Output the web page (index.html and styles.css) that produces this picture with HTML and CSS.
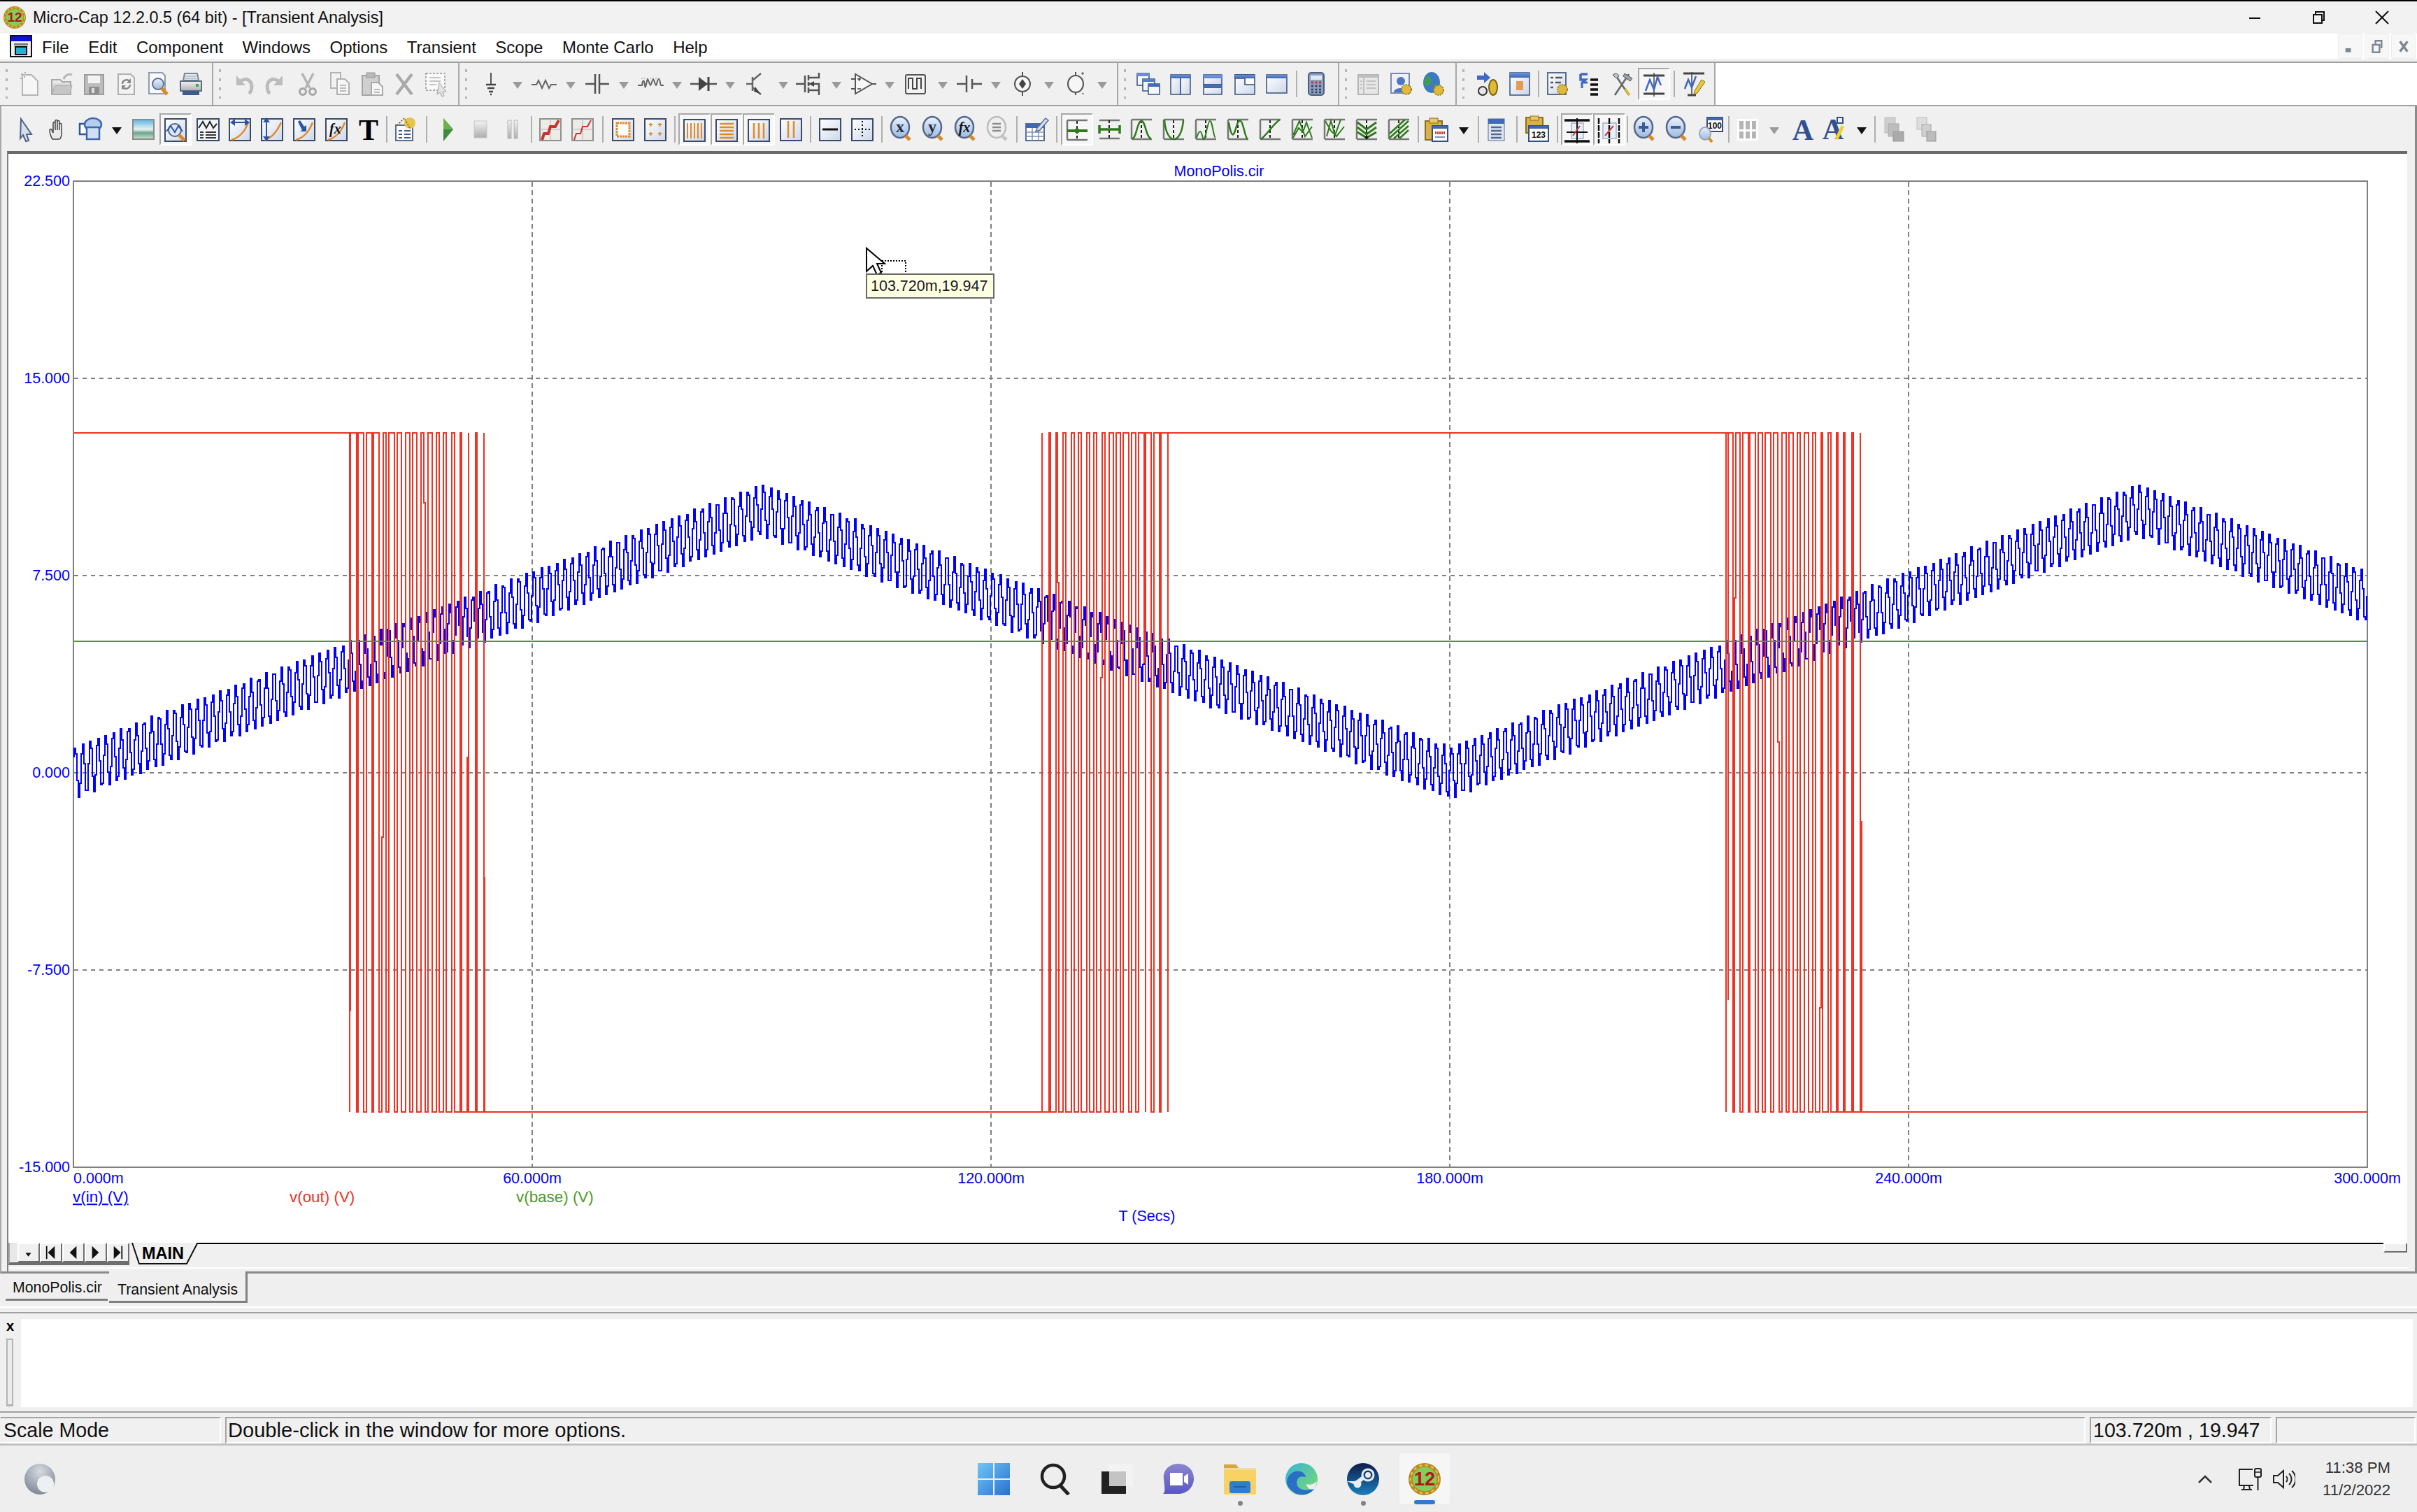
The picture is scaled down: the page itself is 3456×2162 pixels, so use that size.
FILE: index.html
```html
<!DOCTYPE html>
<html lang="en">
<head>
<meta charset="utf-8">
<title>Micro-Cap 12.2.0.5 (64 bit) - [Transient Analysis]</title>
<link rel="stylesheet" href="styles.css">
</head>
<body>
<svg class="defs" width="0" height="0" aria-hidden="true">
  <defs>
    <linearGradient id="gGray" x1="0" y1="0" x2="0" y2="1"><stop offset="0" stop-color="#f2f2f2"/><stop offset="1" stop-color="#aeaeae"/></linearGradient>
    <linearGradient id="gPage" x1="0" y1="0" x2="1" y2="1"><stop offset="0" stop-color="#ffffff"/><stop offset="1" stop-color="#cdd7ea"/></linearGradient>
    <linearGradient id="gBlue" x1="0" y1="0" x2="0" y2="1"><stop offset="0" stop-color="#6f95dc"/><stop offset="1" stop-color="#3e66b0"/></linearGradient>
    <linearGradient id="gSky" x1="0" y1="0" x2="0" y2="1"><stop offset="0" stop-color="#5fb2dc"/><stop offset=".5" stop-color="#e6f3f4"/><stop offset=".68" stop-color="#6aa487"/><stop offset="1" stop-color="#cfe4d8"/></linearGradient>
    <linearGradient id="gGlass" x1="0" y1="0" x2="0" y2="1"><stop offset="0" stop-color="#eaf2fb"/><stop offset="1" stop-color="#9db9de"/></linearGradient>
    <linearGradient id="gWin" x1="0" y1="0" x2="1" y2="1"><stop offset="0" stop-color="#6fc6f5"/><stop offset="1" stop-color="#2a6fd0"/></linearGradient>
    <linearGradient id="gChat" x1="0" y1="0" x2="0" y2="1"><stop offset="0" stop-color="#8d86cf"/><stop offset="1" stop-color="#5a57c4"/></linearGradient>
    <linearGradient id="gEdge" x1="0" y1="0" x2="1" y2="1"><stop offset="0" stop-color="#36b4d8"/><stop offset="1" stop-color="#7fdc6a"/></linearGradient>
    <linearGradient id="gSteam" x1="0" y1="0" x2="0" y2="1"><stop offset="0" stop-color="#0f1d4a"/><stop offset="1" stop-color="#1a7fbd"/></linearGradient>
    <radialGradient id="gOrb" cx=".5" cy=".25" r=".9"><stop offset="0" stop-color="#d6dbe2"/><stop offset="1" stop-color="#6e7785"/></radialGradient>

    <!-- row 1: file -->
    <symbol id="i-new" viewBox="0 0 46 40"><path d="M12 7h13l9 9v20H12z" fill="#f6f6f6" stroke="#b5b5b5" stroke-width="2"/><path d="M10 5h2v2h-2zM15 3h2v2h-2zM20 6h2v2h-2zM14 9h2v2h-2zM9 11h2v2H9z" fill="#aaa"/></symbol>
    <symbol id="i-open" viewBox="0 0 46 40"><path d="M8 14h12l3 3h12v18H8z" fill="url(#gGray)" stroke="#a8a8a8" stroke-width="2"/><path d="M25 13c2-6 8-8 12-6" fill="none" stroke="#b5b5b5" stroke-width="3"/><path d="M8 35l5-13h24l-3 13z" fill="#c6c6c6" stroke="#aaa"/></symbol>
    <symbol id="i-save" viewBox="0 0 46 40"><rect x="9" y="7" width="27" height="28" fill="#bcbcbc" stroke="#9c9c9c" stroke-width="2"/><rect x="14" y="8" width="17" height="11" fill="#f2f2f2"/><rect x="15" y="24" width="15" height="11" fill="#8e8e8e"/><rect x="19" y="26" width="4" height="7" fill="#ddd"/></symbol>
    <symbol id="i-revert" viewBox="0 0 46 40"><path d="M11 6h18l5 5v24H11z" fill="#f3f3f3" stroke="#b0b0b0" stroke-width="2"/><path d="M17 20a6 6 0 0 1 11-3M28 21a6 6 0 0 1-11 3" fill="none" stroke="#888" stroke-width="2.5"/><path d="M29 12v7h-6zM16 29v-7h6z" fill="#888"/></symbol>
    <symbol id="i-preview" viewBox="0 0 46 40"><path d="M9 4h19l4 4v26H9z" fill="#fafafa" stroke="#8f9bb0" stroke-width="2"/><circle cx="22" cy="20" r="8" fill="url(#gGlass)" stroke="#5a6f95" stroke-width="2"/><path d="M27 26l8 9" stroke="#d98a28" stroke-width="5"/></symbol>
    <symbol id="i-print" viewBox="0 0 46 40"><path d="M14 5h18l2 10H12z" fill="#e4e8ef" stroke="#7c8798" stroke-width="2"/><path d="M14 9h17M14 12h17" stroke="#9aa5b5"/><path d="M8 16h30v14H8z" fill="url(#gGray)" stroke="#5f6d83" stroke-width="2"/><rect x="11" y="30" width="24" height="6" fill="#3c5a8c"/><rect x="30" y="20" width="4" height="4" fill="#2fae4e"/></symbol>
    <!-- row 1: edit -->
    <symbol id="i-undo" viewBox="0 0 46 40"><path d="M31 34c5-4 5-14 1-18-4-4-9-3-13 0" fill="none" stroke="#bcbcbc" stroke-width="5"/><path d="M13 8v14h13z" fill="#bcbcbc"/></symbol>
    <symbol id="i-redo" viewBox="0 0 46 40"><path d="M15 34c-5-4-5-14-1-18 4-4 9-3 13 0" fill="none" stroke="#bcbcbc" stroke-width="5"/><path d="M33 8v14H20z" fill="#bcbcbc"/></symbol>
    <symbol id="i-cut" viewBox="0 0 46 40"><path d="M15 5l11 21M31 5L20 26" stroke="#b5b5b5" stroke-width="3.5" fill="none"/><circle cx="16" cy="31" r="4.5" fill="none" stroke="#a5a5a5" stroke-width="3"/><circle cx="30" cy="31" r="4.5" fill="none" stroke="#a5a5a5" stroke-width="3"/></symbol>
    <symbol id="i-copy" viewBox="0 0 46 40"><path d="M10 4h14v22H10z" fill="#f2f2f2" stroke="#b5b5b5" stroke-width="2"/><path d="M19 13h11l6 6v16H19z" fill="#f7f7f7" stroke="#b0b0b0" stroke-width="2"/><path d="M23 22h9M23 26h9M23 30h9" stroke="#bbb" stroke-width="2"/></symbol>
    <symbol id="i-paste" viewBox="0 0 46 40"><rect x="9" y="8" width="24" height="28" fill="#cfcfcf" stroke="#a5a5a5" stroke-width="2"/><rect x="15" y="4" width="12" height="7" fill="#b8b8b8" stroke="#999"/><path d="M22 18h10l6 6v12H22z" fill="#f7f7f7" stroke="#aaa" stroke-width="2"/><path d="M26 28h8M26 32h8" stroke="#bbb" stroke-width="2"/></symbol>
    <symbol id="i-del" viewBox="0 0 46 40"><path d="M12 6l22 29M34 6L12 35" stroke="#a9a9a9" stroke-width="4.5" fill="none"/></symbol>
    <symbol id="i-selall" viewBox="0 0 46 40"><rect x="8" y="5" width="27" height="24" fill="#fafafa" stroke="#aaa" stroke-width="2" stroke-dasharray="3 2"/><path d="M13 11h16M13 16h16M13 21h10" stroke="#c5c5c5" stroke-width="2"/><path d="M27 18l10 13h-5l2 6-3 1-3-6-4 3z" fill="#e4e4e4" stroke="#a0a0a0"/></symbol>
    <!-- row 1: components -->
    <symbol id="i-ground" viewBox="0 0 46 40"><path d="M23 4v17" stroke="#555" stroke-width="2"/><path d="M16 21h14M18 26h10M20 31h6M22 35h2" stroke="#444" stroke-width="2.5"/></symbol>
    <symbol id="i-res" viewBox="0 0 46 40"><path d="M5 21h7l3-6 5 11 5-11 5 11 3-5h8" fill="none" stroke="#666" stroke-width="2"/></symbol>
    <symbol id="i-cap" viewBox="0 0 46 40"><path d="M6 20h14M26 20h14M20 6v28M26 6v28" fill="none" stroke="#555" stroke-width="2.5"/></symbol>
    <symbol id="i-ind" viewBox="0 0 46 40"><path d="M5 22h6c1-9 3-9 4 0s3-9 4-9 3 9 4 9 3-9 4-9 3 9 4 9 2-9 4-9 2 9 3 9h4" fill="none" stroke="#666" stroke-width="2"/><path d="M10 12h26" stroke="#999" stroke-dasharray="2 2"/></symbol>
    <symbol id="i-diode" viewBox="0 0 46 40"><path d="M4 20h38" stroke="#555" stroke-width="2.5"/><path d="M16 10v20l13-10z" fill="#444"/><path d="M30 10v20" stroke="#444" stroke-width="3"/></symbol>
    <symbol id="i-bjt" viewBox="0 0 46 40"><path d="M8 20h8M17 10v20M17 15l12-10M17 25l12 10" fill="none" stroke="#666" stroke-width="2.5"/><path d="M21 24l7 10-9-3z" fill="#444"/></symbol>
    <symbol id="i-mos" viewBox="0 0 46 40"><path d="M3 20h13M16 8v24M21 7v8M21 17v6M21 25v8M21 11h15V4M21 29h15v7M22 20h14V29" fill="none" stroke="#555" stroke-width="2.5"/><path d="M22 20l7-4v8z" fill="#444"/></symbol>
    <symbol id="i-opamp" viewBox="0 0 46 40"><path d="M12 6v28l24-14z" fill="#f7f7f7" stroke="#555" stroke-width="2"/><path d="M6 13h6M6 27h6M36 20h6" stroke="#555" stroke-width="2"/><path d="M15 13h5M17.500 11v5M15 27h5" stroke="#444" stroke-width="1.500"/></symbol>
    <symbol id="i-pulse" viewBox="0 0 46 40"><rect x="8" y="7" width="28" height="27" rx="2" fill="#f2f2f2" stroke="#555" stroke-width="2"/><path d="M12 27V12h6v15h6V12h6v15" fill="none" stroke="#444" stroke-width="2"/></symbol>
    <symbol id="i-batt" viewBox="0 0 46 40"><path d="M5 20h14M27 20h14M19 8v24M27 13v14" stroke="#555" stroke-width="2.500" fill="none"/></symbol>
    <symbol id="i-vsrc" viewBox="0 0 46 40"><ellipse cx="23" cy="20" rx="11" ry="11" fill="#f6f6f6" stroke="#555" stroke-width="2"/><path d="M23 3v6M23 31v6" stroke="#555" stroke-width="2"/><path d="M23 13l5 7-5 7-5-7z" fill="#444"/></symbol>
    <symbol id="i-isrc" viewBox="0 0 46 40"><ellipse cx="23" cy="20" rx="11" ry="12" fill="#f6f6f6" stroke="#555" stroke-width="2"/><path d="M23 3v5M23 32v4" stroke="#555" stroke-width="2"/><path d="M31 5h4M33 3v4M32 34h3" stroke="#444"/></symbol>
    <!-- windows -->
    <symbol id="i-casc" viewBox="0 0 46 40"><g fill="#f4f7fc" stroke="#34507f" stroke-width="1.500"><rect x="7" y="5" width="17" height="17"/><rect x="15" y="13" width="17" height="17"/><rect x="23" y="20" width="16" height="15"/></g><path d="M7 5h17v4H7zM15 13h17v4H15zM23 20h16v4H23z" fill="url(#gBlue)"/></symbol>
    <symbol id="i-tilev" viewBox="0 0 46 40"><rect x="9" y="7" width="14" height="28" fill="url(#gPage)" stroke="#34507f" stroke-width="1.500"/><rect x="23" y="7" width="14" height="28" fill="url(#gPage)" stroke="#34507f" stroke-width="1.500"/><path d="M9 7h14v5H9zM23 7h14v5H23z" fill="url(#gBlue)"/></symbol>
    <symbol id="i-tileh" viewBox="0 0 46 40"><rect x="10" y="7" width="26" height="14" fill="url(#gPage)" stroke="#34507f" stroke-width="1.500"/><rect x="10" y="21" width="26" height="14" fill="url(#gPage)" stroke="#34507f" stroke-width="1.500"/><path d="M10 7h26v5H10zM10 21h26v5H10z" fill="url(#gBlue)"/></symbol>
    <symbol id="i-tile3" viewBox="0 0 46 40"><path d="M9 7h28v28H9z" fill="url(#gPage)" stroke="#34507f" stroke-width="1.500"/><path d="M23 7v14h14M9 7h14v5H9zM23 7h14v0" fill="none" stroke="#34507f" stroke-width="1.500"/><path d="M9 7h14v5H9zM24 7h13v5H24z" fill="url(#gBlue)"/><path d="M25 13h11v7H25z" fill="#fff"/></symbol>
    <symbol id="i-winf" viewBox="0 0 46 40"><rect x="8" y="7" width="29" height="26" fill="url(#gPage)" stroke="#34507f" stroke-width="1.500"/><path d="M8 7h29v5H8z" fill="url(#gBlue)"/></symbol>
    <symbol id="i-calc" viewBox="0 0 46 40"><rect x="12" y="4" width="22" height="32" rx="4" fill="#8fa0bd" stroke="#4b5d80" stroke-width="2"/><rect x="15" y="8" width="16" height="6" fill="#dfe8f3"/><path d="M16 18h3M21.500 18h3M27 18h3" stroke="#c33" stroke-width="3"/><path d="M16 23h3M21.500 23h3M27 23h3M16 28h3M21.500 28h3M27 28h3M16 32h3M21.500 32h3M27 32h3" stroke="#2f3f63" stroke-width="2.500"/></symbol>
    <symbol id="i-next" viewBox="0 0 46 40"><rect x="8" y="7" width="29" height="28" fill="#e6e6e6" stroke="#b5b5b5" stroke-width="2"/><path d="M8 7h29v4H8z" fill="#bdbdbd"/><path d="M16 11v24M11 16h3M11 21h3M11 26h3M20 16h13M20 21h13M20 26h13" stroke="#b5b5b5" stroke-width="1.500"/></symbol>
    <symbol id="i-person" viewBox="0 0 46 40"><rect x="9" y="5" width="26" height="28" fill="#eef1f6" stroke="#7a8aa8" stroke-width="2"/><circle cx="23" cy="16" r="6" fill="#4d77c4"/><path d="M13 32c0-8 20-8 20 0z" fill="#4d77c4"/><circle cx="31" cy="28" r="7" fill="#e1b93a" stroke="#9c7d16" stroke-dasharray="2 1.500" stroke-width="2"/></symbol>
    <symbol id="i-globe" viewBox="0 0 46 40"><ellipse cx="21" cy="18" rx="12" ry="15" fill="#3c7bc4"/><path d="M14 8c5 2 9 6 5 12s-7 2-9-2M24 22c5-2 9 0 7 5s-6 5-7 0z" fill="#3f9e4d"/><circle cx="31" cy="29" r="7" fill="#e1b93a" stroke="#9c7d16" stroke-dasharray="2 1.500" stroke-width="2"/></symbol>
    <symbol id="i-run" viewBox="0 0 46 40"><path d="M8 8h10V3l9 8-9 8v-5H8z" fill="#3f68c4"/><circle cx="16" cy="30" r="6" fill="#e8e8e8" stroke="#333" stroke-width="2"/><ellipse cx="31" cy="25" rx="6" ry="11" fill="#e1b93a" stroke="#7a6412" stroke-width="2"/></symbol>
    <symbol id="i-wino" viewBox="0 0 46 40"><rect x="9" y="4" width="28" height="32" fill="url(#gPage)" stroke="#34507f" stroke-width="1.500"/><path d="M9 4h28v7H9z" fill="url(#gBlue)"/><rect x="18" y="16" width="10" height="13" fill="#e69a52"/></symbol>
    <symbol id="i-listc" viewBox="0 0 46 40"><rect x="9" y="4" width="26" height="31" fill="url(#gPage)" stroke="#5a6c8e" stroke-width="2"/><path d="M13 11h4M20 11h10M13 18h4M20 18h8M13 25h4" stroke="#555" stroke-width="2.500"/><circle cx="30" cy="28" r="7" fill="#e1b93a" stroke="#9c7d16" stroke-dasharray="2 1.500" stroke-width="2"/></symbol>
    <symbol id="i-swap" viewBox="0 0 46 40"><path d="M10 6h10M10 6v8h7l-4 4" fill="none" stroke="#3f68c4" stroke-width="3.500"/><path d="M12 26v-8h8" fill="none" stroke="#3f68c4" stroke-width="3"/><path d="M24 14h11M24 21h11M24 28h11M24 35h11" stroke="#111" stroke-width="3.500"/></symbol>
    <symbol id="i-tools" viewBox="0 0 46 40"><path d="M13 6l20 30M33 6L13 36" stroke="#666" stroke-width="2.500"/><path d="M27 5l11 7-3 4-10-7z" fill="#9aa2ad" stroke="#555"/><path d="M10 7c4-3 8-2 9 2l-4 3z" fill="#b9bfc8" stroke="#555"/><path d="M28 27l6 9" stroke="#e1b93a" stroke-width="3.500"/></symbol>
    <symbol id="i-wave" viewBox="0 0 46 40"><path d="M8 7h30M8 33h30" stroke="#444" stroke-width="3"/><path d="M23 3v34" stroke="#444" stroke-width="1.500"/><path d="M11 29l6-16 6 14 5-18 5 12" fill="none" stroke="#3f68c4" stroke-width="2.500"/></symbol>
    <symbol id="i-wavep" viewBox="0 0 46 40"><path d="M8 5h30M14 36h12" stroke="#444" stroke-width="3"/><path d="M20 3v34" stroke="#444" stroke-width="1.500"/><path d="M10 27l5-13 5 11 6-16" fill="none" stroke="#3f68c4" stroke-width="2.500"/><path d="M34 14l5 3-11 16-5 2 1-5z" fill="#e9c73a" stroke="#8b6f1a"/></symbol>
    <!-- row 2: tools -->
    <symbol id="i-arrow" viewBox="0 0 46 40"><path d="M16 5l15 22h-7l3 9-4 1-4-9-4 5z" fill="#d7dfee" stroke="#4f6489" stroke-width="2"/></symbol>
    <symbol id="i-hand" viewBox="0 0 46 40"><path d="M15 34c-3-5-4-9-4-13 0-2 3-2 3 0l2 4V11c0-2 3-2 3 0v10-13c0-2 3-2 3 0v13V9c0-2 3-2 3 0v12-8c0-2 3-2 3 0v14c0 3-2 7-3 7z" fill="#e9e9e9" stroke="#444" stroke-width="1.500"/></symbol>
    <symbol id="i-shapes" viewBox="0 0 46 40"><rect x="8" y="12" width="15" height="15" fill="#fff" stroke="#2f5596" stroke-width="2.500"/><ellipse cx="27" cy="13" rx="12" ry="9" fill="#b7cdee" stroke="#3f68ac" stroke-width="2.500"/><path d="M18 34V17h18v17z" fill="#cfdff4" stroke="#3f68ac" stroke-width="2.500"/></symbol>
    <symbol id="i-image" viewBox="0 0 46 40"><rect x="8" y="6" width="30" height="28" fill="url(#gSky)" stroke="#8c8c8c" stroke-width="2"/></symbol>
    <symbol id="i-scope" viewBox="0 0 46 40"><rect x="8" y="4" width="30" height="32" fill="url(#gPage)" stroke="#3a4a6a" stroke-width="2"/><circle cx="22" cy="20" r="9" fill="#dce8f8" stroke="#55688c" stroke-width="2"/><path d="M10 22l6-8 6 9 5-9 6 8" fill="none" stroke="#2855a8" stroke-width="2"/><path d="M28 27l8 8" stroke="#d98a28" stroke-width="5"/></symbol>
    <symbol id="i-wlist" viewBox="0 0 46 40"><rect x="8" y="5" width="31" height="31" fill="#f2f4f8" stroke="#3a4a6a" stroke-width="2"/><path d="M10 18l6-9 5 9 5-9 5 9 5-6" fill="none" stroke="#222" stroke-width="2"/><path d="M12 24h5M20 24h15M12 28h5M20 28h15M12 32h5M20 32h15" stroke="#333" stroke-width="2"/></symbol>
    <symbol id="i-xs" viewBox="0 0 46 40"><rect x="8" y="5" width="30" height="31" fill="url(#gPage)" stroke="#3a4a6a" stroke-width="2"/><path d="M11 35c12-3 20-14 24-25" fill="none" stroke="#e08a28" stroke-width="2.500"/><path d="M9 10l7-5v4h14V5l7 5-7 5v-4H16v4z" fill="#2855a8"/></symbol>
    <symbol id="i-ys" viewBox="0 0 46 40"><rect x="8" y="5" width="30" height="31" fill="url(#gPage)" stroke="#3a4a6a" stroke-width="2"/><path d="M13 35c10-3 18-14 23-25" fill="none" stroke="#e08a28" stroke-width="2.500"/><path d="M15 3l5 7h-4v20h4l-5 7-5-7h4V10h-4z" fill="#2855a8"/></symbol>
    <symbol id="i-as" viewBox="0 0 46 40"><rect x="8" y="5" width="30" height="31" fill="url(#gPage)" stroke="#3a4a6a" stroke-width="2"/><path d="M11 35c12-3 20-14 24-25" fill="none" stroke="#e08a28" stroke-width="2.500"/><path d="M14 9l3-2 6 9 3-2v9h-9l3-2z" fill="#2855a8"/></symbol>
    <symbol id="i-fx" viewBox="0 0 46 40"><rect x="8" y="5" width="30" height="31" fill="url(#gPage)" stroke="#3a4a6a" stroke-width="2"/><path d="M11 35c12-3 20-14 24-25" fill="none" stroke="#e08a28" stroke-width="2.500"/><text class="ic-fx" x="13" y="26">fx</text></symbol>
    <symbol id="i-T" viewBox="0 0 46 40"><text class="ic-T" x="23" y="35" text-anchor="middle">T</text></symbol>
    <symbol id="i-props" viewBox="0 0 46 40"><rect x="10" y="14" width="24" height="22" fill="#fdfdfd" stroke="#5a6c8e" stroke-width="2"/><path d="M14 22h5M22 22h9M14 27h5M22 27h9M14 32h5M22 32h9" stroke="#3c5a8c" stroke-width="2"/><circle cx="30" cy="11" r="8" fill="#e8c34a"/><path d="M12 14l10-10 9 16" fill="none" stroke="#7c6a1c" stroke-width="2" stroke-dasharray="2 2"/></symbol>
    <symbol id="i-play" viewBox="0 0 46 40"><path d="M16 4l14 16-14 17z" fill="#3f8a3f"/><path d="M16 4l14 16H16z" fill="#6eb04c"/></symbol>
    <symbol id="i-stop" viewBox="0 0 46 40"><rect x="14" y="8" width="18" height="24" fill="url(#gGray)" stroke="#c6c6c6"/></symbol>
    <symbol id="i-pause" viewBox="0 0 46 40"><rect x="16" y="7" width="5" height="26" fill="url(#gGray)" stroke="#b5b5b5"/><rect x="25" y="7" width="5" height="26" fill="url(#gGray)" stroke="#b5b5b5"/></symbol>
    <symbol id="i-rp1" viewBox="0 0 46 40"><rect x="8" y="5" width="30" height="31" fill="#ecebe6" stroke="#8f8f8f" stroke-width="2"/><path d="M23 5v31M8 20h30" stroke="#b5b5b5"/><path d="M11 35l3-9h6l3-10h7l5-9" fill="none" stroke="#c5352f" stroke-width="4"/></symbol>
    <symbol id="i-rp2" viewBox="0 0 46 40"><rect x="8" y="5" width="30" height="31" fill="#ecebe6" stroke="#8f8f8f" stroke-width="2"/><path d="M23 5v31M8 20h30" stroke="#b5b5b5"/><path d="M11 35l3-9h6l3-10h7l5-9" fill="none" stroke="#c5352f" stroke-width="2"/></symbol>
    <symbol id="i-chip" viewBox="0 0 46 40"><rect x="8" y="5" width="30" height="31" fill="url(#gPage)" stroke="#3a4a6a" stroke-width="2"/><rect x="14" y="11" width="18" height="19" fill="#fff" stroke="#e08a28" stroke-width="3" stroke-dasharray="3 1"/></symbol>
    <symbol id="i-dots" viewBox="0 0 46 40"><rect x="8" y="5" width="30" height="31" fill="url(#gPage)" stroke="#3a4a6a" stroke-width="2"/><path d="M14 13h5M16.500 11v5M27 13h5M29.500 11v5M14 26h5M16.500 24v5M27 26h5M29.500 24v5" stroke="#e08a28" stroke-width="2"/></symbol>
    <symbol id="i-lv4" viewBox="0 0 46 40"><rect x="8" y="5" width="30" height="31" fill="url(#gPage)" stroke="#3a4a6a" stroke-width="2"/><path d="M13 10v22M18 10v22M23 10v22M28 10v22M33 10v22" stroke="#e08a28" stroke-width="2"/></symbol>
    <symbol id="i-lh" viewBox="0 0 46 40"><rect x="8" y="5" width="30" height="31" fill="url(#gPage)" stroke="#3a4a6a" stroke-width="2"/><path d="M13 11h20M13 16h20M13 21h20M13 26h20M13 31h20" stroke="#e08a28" stroke-width="2.500"/></symbol>
    <symbol id="i-lv3" viewBox="0 0 46 40"><rect x="8" y="5" width="30" height="31" fill="url(#gPage)" stroke="#3a4a6a" stroke-width="2"/><path d="M16 10v22M23 10v22M30 10v22" stroke="#e08a28" stroke-width="2.500"/></symbol>
    <symbol id="i-lv2" viewBox="0 0 46 40"><rect x="8" y="5" width="30" height="31" fill="url(#gPage)" stroke="#3a4a6a" stroke-width="2"/><path d="M19 8v24M27 8v24" stroke="#e08a28" stroke-width="2.500"/></symbol>
    <symbol id="i-hl" viewBox="0 0 46 40"><rect x="8" y="5" width="30" height="31" fill="url(#gPage)" stroke="#3a4a6a" stroke-width="2"/><path d="M12 20h22" stroke="#111" stroke-width="3"/></symbol>
    <symbol id="i-dv" viewBox="0 0 46 40"><rect x="8" y="5" width="30" height="31" fill="url(#gPage)" stroke="#3a4a6a" stroke-width="2"/><path d="M23 8v25" stroke="#111" stroke-width="2" stroke-dasharray="2 3"/><path d="M12 20h22" stroke="#111" stroke-width="2" stroke-dasharray="2 3"/></symbol>
    <symbol id="i-mglass" viewBox="0 0 46 40"><ellipse cx="21" cy="17" rx="13" ry="15" fill="url(#gGlass)" stroke="#55688c" stroke-width="2.500"/><path d="M29 29l6 6" stroke="#d98a28" stroke-width="5"/></symbol>
    <symbol id="i-mx" viewBox="0 0 46 40"><use href="#i-mglass"/><text class="ic-m" x="21" y="24" text-anchor="middle">x</text></symbol>
    <symbol id="i-my" viewBox="0 0 46 40"><use href="#i-mglass"/><text class="ic-m" x="21" y="24" text-anchor="middle">y</text></symbol>
    <symbol id="i-mf" viewBox="0 0 46 40"><use href="#i-mglass"/><text class="ic-fx" x="21" y="24" text-anchor="middle">fx</text></symbol>
    <symbol id="i-meq" viewBox="0 0 46 40"><ellipse cx="21" cy="17" rx="13" ry="15" fill="#efefef" stroke="#bdbdbd" stroke-width="2.500"/><path d="M15 12h12M15 17h12M15 22h12" stroke="#8c8c8c" stroke-width="2.500"/><path d="M29 29l6 6" stroke="#c5c5c5" stroke-width="5"/></symbol>
    <symbol id="i-tedit" viewBox="0 0 46 40"><rect x="9" y="12" width="26" height="24" fill="#fff" stroke="#5a6c8e" stroke-width="2"/><path d="M9 12h26v6H9z" fill="#3f68b0"/><path d="M9 24h26M9 30h26M18 18v18M27 18v18" stroke="#7d91b5" stroke-width="1.500"/><path d="M25 18L37 4l4 3-12 14-6 2z" fill="#cfe0f4" stroke="#5a6c8e" stroke-width="1.500"/></symbol>
    <symbol id="i-gb" viewBox="0 0 46 40"><path d="M9 6h29M9 34h29M9 6v28" fill="none" stroke="#777" stroke-width="2.500"/><path d="M23 7v26" stroke="#222" stroke-width="2" stroke-dasharray="4 3"/></symbol>
    <symbol id="i-peak1" viewBox="0 0 46 40"><use href="#i-gb"/><path d="M9 21h29" stroke="#2f7a1c" stroke-width="4"/><circle cx="23" cy="21" r="3.500" fill="#2f7a1c"/></symbol>
    <symbol id="i-peak2" viewBox="0 0 46 40"><path d="M9 7h29M9 33h29" stroke="#777" stroke-width="2.500"/><path d="M23 7v26" stroke="#222" stroke-width="2" stroke-dasharray="4 3"/><path d="M9 20h29M9 14v12M38 14v12" fill="none" stroke="#2f7a1c" stroke-width="3.500"/></symbol>
    <symbol id="i-c1" viewBox="0 0 46 40"><use href="#i-gb"/><path d="M10 33C16 33 17 8 23 8s7 25 14 25" fill="none" stroke="#2f7a1c" stroke-width="2.500"/></symbol>
    <symbol id="i-c2" viewBox="0 0 46 40"><use href="#i-gb"/><path d="M10 7c3 36 24 36 27 0" fill="none" stroke="#2f7a1c" stroke-width="2.500"/></symbol>
    <symbol id="i-c3" viewBox="0 0 46 40"><use href="#i-gb"/><path d="M10 32c4-12 6-12 9 0s6-24 10-24 5 24 8 24" fill="none" stroke="#2f7a1c" stroke-width="2"/></symbol>
    <symbol id="i-c4" viewBox="0 0 46 40"><use href="#i-gb"/><path d="M10 10c4 24 7 18 9 12s4-16 8-14 6 24 10 26" fill="none" stroke="#2f7a1c" stroke-width="2.500"/></symbol>
    <symbol id="i-c5" viewBox="0 0 46 40"><use href="#i-gb"/><path d="M10 34c8-6 18-22 27-28" fill="none" stroke="#2f7a1c" stroke-width="2.500"/></symbol>
    <symbol id="i-c6" viewBox="0 0 46 40"><use href="#i-gb"/><path d="M10 32l8-14 6 6 5-14 8 22M10 28l9-20 8 22 10-14" fill="none" stroke="#2f7a1c" stroke-width="2"/></symbol>
    <symbol id="i-c7" viewBox="0 0 46 40"><use href="#i-gb"/><path d="M10 8l8 14 8 8 11-14M12 30l6-22 6 20 8-22" fill="none" stroke="#2f7a1c" stroke-width="2"/></symbol>
    <symbol id="i-c8" viewBox="0 0 46 40"><use href="#i-gb"/><path d="M10 10l13 10 14-10M10 17l13 10 14-10M10 24l13 8 14-8" fill="none" stroke="#2f7a1c" stroke-width="3"/><path d="M20 30h6l-3 5z" fill="#111"/></symbol>
    <symbol id="i-c9" viewBox="0 0 46 40"><use href="#i-gb"/><path d="M10 32L37 8M10 26L32 6M16 33L37 15M24 33l13-12" fill="none" stroke="#2f7a1c" stroke-width="2.500"/></symbol>
    <symbol id="i-clip" viewBox="0 0 46 40"><rect x="6" y="8" width="24" height="27" fill="#d9b04a" stroke="#8c6f24" stroke-width="2"/><rect x="12" y="4" width="12" height="7" fill="#e6c76a" stroke="#8c6f24"/><rect x="16" y="15" width="22" height="22" fill="#fff" stroke="#34507f" stroke-width="2"/><path d="M16 15h22v4H16z" fill="#3f68b0"/><path d="M20 25h14" stroke="#c0392b" stroke-width="4" stroke-dasharray="2 1"/><path d="M20 31h14" stroke="#7d91b5" stroke-width="2"/></symbol>
    <symbol id="i-clip2" viewBox="0 0 46 40"><rect x="7" y="3" width="24" height="22" fill="#d9b04a" stroke="#8c6f24" stroke-width="2"/><rect x="13" y="1" width="12" height="6" fill="#e6c76a" stroke="#8c6f24"/><rect x="11" y="15" width="28" height="22" fill="#fff" stroke="#34507f" stroke-width="2"/><path d="M11 15h28v4H11z" fill="#3f68b0"/><text class="ic-123" x="25" y="32" text-anchor="middle">123</text></symbol>
    <symbol id="i-list" viewBox="0 0 46 40"><rect x="11" y="5" width="23" height="31" fill="#dce6f5" stroke="#5a6c8e"/><path d="M11 5h23v7H11z" fill="#3f68c4"/><path d="M15 17h15M15 22h15M15 27h15M15 32h15" stroke="#55688c" stroke-width="2.500"/></symbol>
    <symbol id="i-trk1" viewBox="0 0 46 40"><rect x="15" y="10" width="17" height="22" fill="#eaf0fa" stroke="#7d91b5"/><path d="M5 6h36M5 36h36" stroke="#111" stroke-width="3.500"/><path d="M23 3v36M8 23h30" stroke="#111" stroke-width="2"/><path d="M17 28l10-14" stroke="#d0352f" stroke-width="2"/></symbol>
    <symbol id="i-trk2" viewBox="0 0 46 40"><rect x="14" y="10" width="19" height="22" fill="#eaf0fa" stroke="#7d91b5"/><path d="M8 3v36M23 3v36M37 3v36" stroke="#111" stroke-width="2.500" stroke-dasharray="8 2"/><path d="M17 28l12-14" stroke="#d0352f" stroke-width="2"/></symbol>
    <symbol id="i-zp" viewBox="0 0 46 40"><use href="#i-mglass"/><path d="M14 17h14M21 10v14" stroke="#3a5a90" stroke-width="4"/></symbol>
    <symbol id="i-zm" viewBox="0 0 46 40"><use href="#i-mglass"/><path d="M14 17h14" stroke="#3a5a90" stroke-width="4"/></symbol>
    <symbol id="i-zv" viewBox="0 0 46 40"><rect x="20" y="3" width="22" height="20" fill="#fff" stroke="#34507f" stroke-width="2"/><path d="M20 3h22v4H20z" fill="#3f68b0"/><text class="ic-123" x="31" y="19" text-anchor="middle">100</text><ellipse cx="17" cy="26" rx="8" ry="9" fill="url(#gGlass)" stroke="#9aa5b5" stroke-width="2"/><path d="M22 32l5 6" stroke="#d98a28" stroke-width="4"/></symbol>
    <symbol id="i-grid" viewBox="0 0 46 40"><rect x="8" y="5" width="30" height="31" fill="#fff"/><path d="M11 8h6v12h-6zM20 8h6v12h-6zM29 8h6v12h-6zM11 23h6v10h-6zM20 23h6v10h-6zM29 23h6v10h-6z" fill="#b5b5b5"/></symbol>
    <symbol id="i-A" viewBox="0 0 46 40"><text class="ic-A" x="23" y="35" text-anchor="middle">A</text></symbol>
    <symbol id="i-A2" viewBox="0 0 46 40"><text class="ic-A" x="20" y="34" text-anchor="middle">A</text><rect x="26" y="3" width="8" height="8" fill="none" stroke="#34507f" stroke-width="2"/><path d="M34 15l-9 19" stroke="#f0cf32" stroke-width="5"/></symbol>
    <symbol id="i-b1" viewBox="0 0 46 40"><rect x="10" y="3" width="15" height="22" fill="#cfcfcf" stroke="#bbb"/><rect x="15" y="12" width="15" height="18" fill="#bdbdbd" stroke="#aaa"/><rect x="22" y="23" width="15" height="14" fill="#aaa" stroke="#999"/></symbol>
    <symbol id="i-b2" viewBox="0 0 46 40"><rect x="10" y="3" width="14" height="17" fill="#dedede" stroke="#bbb"/><rect x="17" y="13" width="13" height="17" fill="#cfcfcf" stroke="#aaa"/><rect x="24" y="23" width="13" height="14" fill="#bbb" stroke="#999"/></symbol>
    <symbol id="i-mc" viewBox="0 0 32 32"><circle cx="16" cy="16" r="14" fill="#86cc58" stroke="#b98a24" stroke-width="4"/><circle cx="16" cy="16" r="14" fill="none" stroke="#e8c65a" stroke-width="1.500" stroke-dasharray="3 3"/><text class="ic-mc" x="16" y="22" text-anchor="middle">12</text></symbol>
  </defs>
</svg>

<div class="app">
  <header class="titlebar">
    <svg class="title-ic"><use href="#i-mc"/></svg>
    <span class="title-text">Micro-Cap 12.2.0.5 (64 bit) - [Transient Analysis]</span>
    <div class="winctl">
      <svg class="wc" viewBox="0 0 20 20"><path d="M2 11h16" stroke="#111" stroke-width="2"/></svg>
      <svg class="wc" viewBox="0 0 20 20"><path d="M3 6h12v12H3zM6 6V2h12v12h-3" fill="none" stroke="#111" stroke-width="2"/></svg>
      <svg class="wc" viewBox="0 0 20 20"><path d="M1 1l18 18M19 1L1 19" stroke="#111" stroke-width="2"/></svg>
    </div>
  </header>

  <nav class="menubar">
    <svg class="doc-ic" viewBox="0 0 32 32"><rect x="1" y="1" width="30" height="30" fill="#e8f2f8" stroke="#111" stroke-width="2"/><rect x="2" y="2" width="28" height="7" fill="#1010d8"/><rect x="6" y="12" width="20" height="3" fill="#777"/><rect x="8" y="17" width="16" height="11" fill="#1fb6d6" stroke="#111" stroke-width="2"/></svg>
    <div class="menu-items">
      <span>File</span><span>Edit</span><span>Component</span><span>Windows</span><span>Options</span><span>Transient</span><span>Scope</span><span>Monte Carlo</span><span>Help</span>
    </div>
    <div class="mdictl">
      <span class="mc-btn"><svg viewBox="0 0 34 34"><rect x="10" y="20" width="8" height="6" fill="#7d8793"/></svg></span>
      <span class="mc-btn"><svg viewBox="0 0 34 34"><path d="M11 15h10v11H11zM15 15V9h9v11" fill="none" stroke="#7d8793" stroke-width="2.500"/></svg></span>
      <span class="mc-btn"><svg viewBox="0 0 34 34"><path d="M12 10l11 15M23 10L12 25" stroke="#7d8793" stroke-width="3.500"/></svg></span>
    </div>
  </nav>

  <div class="toolbar-main">
    <div class="tb-group g1">
      <i class="grip"></i>
      <svg class="ic"><use href="#i-new"/></svg><svg class="ic"><use href="#i-open"/></svg><svg class="ic"><use href="#i-save"/></svg><svg class="ic"><use href="#i-revert"/></svg><svg class="ic"><use href="#i-preview"/></svg><svg class="ic"><use href="#i-print"/></svg>
    </div>
    <div class="tb-group g2">
      <i class="grip"></i>
      <svg class="ic"><use href="#i-undo"/></svg><svg class="ic"><use href="#i-redo"/></svg><svg class="ic"><use href="#i-cut"/></svg><svg class="ic"><use href="#i-copy"/></svg><svg class="ic"><use href="#i-paste"/></svg><svg class="ic"><use href="#i-del"/></svg><svg class="ic"><use href="#i-selall"/></svg>
    </div>
    <div class="tb-group g3">
      <i class="grip"></i>
      <svg class="ic"><use href="#i-ground"/></svg><i class="drop gray"></i>
      <svg class="ic"><use href="#i-res"/></svg><i class="drop gray"></i>
      <svg class="ic"><use href="#i-cap"/></svg><i class="drop gray"></i>
      <svg class="ic"><use href="#i-ind"/></svg><i class="drop gray"></i>
      <svg class="ic"><use href="#i-diode"/></svg><i class="drop gray"></i>
      <svg class="ic"><use href="#i-bjt"/></svg><i class="drop gray"></i>
      <svg class="ic"><use href="#i-mos"/></svg><i class="drop gray"></i>
      <svg class="ic"><use href="#i-opamp"/></svg><i class="drop gray"></i>
      <svg class="ic"><use href="#i-pulse"/></svg><i class="drop gray"></i>
      <svg class="ic"><use href="#i-batt"/></svg><i class="drop gray"></i>
      <svg class="ic"><use href="#i-vsrc"/></svg><i class="drop gray"></i>
      <svg class="ic"><use href="#i-isrc"/></svg><i class="drop gray"></i>
    </div>
    <div class="tb-group g4">
      <i class="grip"></i>
      <svg class="ic"><use href="#i-casc"/></svg><svg class="ic"><use href="#i-tilev"/></svg><svg class="ic"><use href="#i-tileh"/></svg><svg class="ic"><use href="#i-tile3"/></svg><svg class="ic"><use href="#i-winf"/></svg>
      <i class="sep s10"></i>
      <svg class="ic"><use href="#i-calc"/></svg>
    </div>
    <div class="tb-group g5">
      <i class="grip"></i>
      <svg class="ic"><use href="#i-next"/></svg><svg class="ic"><use href="#i-person"/></svg><svg class="ic"><use href="#i-globe"/></svg>
    </div>
    <div class="tb-group g6">
      <i class="grip"></i>
      <svg class="ic"><use href="#i-run"/></svg><svg class="ic"><use href="#i-wino"/></svg>
      <i class="sep s8"></i>
      <svg class="ic"><use href="#i-listc"/></svg><svg class="ic"><use href="#i-swap"/></svg><svg class="ic"><use href="#i-tools"/></svg>
      <span class="on"><svg class="ic"><use href="#i-wave"/></svg></span>
      <i class="sep s11"></i>
      <svg class="ic"><use href="#i-wavep"/></svg>
    </div>
  </div>

  <section class="child">
    <div class="toolbar-plot">
      <svg class="ic"><use href="#i-arrow"/></svg><svg class="ic"><use href="#i-hand"/></svg><svg class="ic"><use href="#i-shapes"/></svg><i class="drop"></i>
      <svg class="ic"><use href="#i-image"/></svg>
      <span class="on"><svg class="ic"><use href="#i-scope"/></svg></span>
      <svg class="ic"><use href="#i-wlist"/></svg><svg class="ic"><use href="#i-xs"/></svg><svg class="ic"><use href="#i-ys"/></svg><svg class="ic"><use href="#i-as"/></svg><svg class="ic"><use href="#i-fx"/></svg><svg class="ic"><use href="#i-T"/></svg>
      <i class="sep s6"></i>
      <svg class="ic"><use href="#i-props"/></svg>
      <i class="sep s16"></i>
      <svg class="ic"><use href="#i-play"/></svg><svg class="ic"><use href="#i-stop"/></svg><svg class="ic"><use href="#i-pause"/></svg>
      <i class="sep s8"></i>
      <svg class="ic"><use href="#i-rp1"/></svg><svg class="ic"><use href="#i-rp2"/></svg>
      <i class="sep s12"></i>
      <svg class="ic"><use href="#i-chip"/></svg><svg class="ic"><use href="#i-dots"/></svg>
      <i class="sep s10"></i>
      <span class="on"><svg class="ic"><use href="#i-lv4"/></svg></span><span class="on"><svg class="ic"><use href="#i-lh"/></svg></span><span class="on"><svg class="ic"><use href="#i-lv3"/></svg></span><svg class="ic"><use href="#i-lv2"/></svg>
      <i class="sep s10"></i>
      <svg class="ic"><use href="#i-hl"/></svg><svg class="ic"><use href="#i-dv"/></svg>
      <i class="sep s10"></i>
      <svg class="ic"><use href="#i-mx"/></svg><svg class="ic"><use href="#i-my"/></svg><svg class="ic"><use href="#i-mf"/></svg><svg class="ic"><use href="#i-meq"/></svg>
      <i class="sep s8"></i>
      <svg class="ic"><use href="#i-tedit"/></svg>
      <i class="sep s13"></i>
      <span class="on"><svg class="ic"><use href="#i-peak1"/></svg></span><svg class="ic"><use href="#i-peak2"/></svg>
      <svg class="ic"><use href="#i-c1"/></svg><svg class="ic"><use href="#i-c2"/></svg><svg class="ic"><use href="#i-c3"/></svg><svg class="ic"><use href="#i-c4"/></svg><svg class="ic"><use href="#i-c5"/></svg><svg class="ic"><use href="#i-c6"/></svg><svg class="ic"><use href="#i-c7"/></svg><svg class="ic"><use href="#i-c8"/></svg><svg class="ic"><use href="#i-c9"/></svg>
      <i class="sep s9"></i>
      <svg class="ic"><use href="#i-clip"/></svg><i class="drop wide"></i>
      <i class="sep s7"></i>
      <svg class="ic"><use href="#i-list"/></svg>
      <i class="sep s12"></i>
      <svg class="ic"><use href="#i-clip2"/></svg>
      <i class="sep s11"></i>
      <span class="on"><svg class="ic"><use href="#i-trk1"/></svg></span><span class="on"><svg class="ic"><use href="#i-trk2"/></svg></span>
      <i class="sep s5"></i>
      <svg class="ic"><use href="#i-zp"/></svg><svg class="ic"><use href="#i-zm"/></svg><svg class="ic"><use href="#i-zv"/></svg>
      <i class="sep s9"></i>
      <svg class="ic"><use href="#i-grid"/></svg><i class="drop gray wider"></i>
      <svg class="ic"><use href="#i-A"/></svg><svg class="ic"><use href="#i-A2"/></svg><i class="drop"></i>
      <i class="sep s8"></i>
      <svg class="ic"><use href="#i-b1"/></svg><svg class="ic"><use href="#i-b2"/></svg>
    </div>

    <div class="client">
      <svg class="chart" viewBox="12 220 3430 1557" width="3430" height="1557">
        <g class="grid-h">
          <path d="M106 541H3384M106 823H3384M106 1105H3384M106 1387H3384"/>
        </g>
        <g class="grid-v">
          <path d="M761 260V1668M1417 260V1668M2073 260V1668M2729 260V1668"/>
        </g>
        <rect class="frame" x="105" y="259" width="3280" height="1410"/>
        <path id="w-in" class="trace t-in"/>
        <path id="w-out" class="trace t-out"/>
        <path class="trace t-base" d="M106 917H3384"/>

        <text class="lbl end" x="100" y="266">22.500</text>
        <text class="lbl end" x="100" y="548">15.000</text>
        <text class="lbl end" x="100" y="830">7.500</text>
        <text class="lbl end" x="100" y="1112">0.000</text>
        <text class="lbl end" x="100" y="1394">-7.500</text>
        <text class="lbl end" x="100" y="1676">-15.000</text>
        <text class="lbl" x="105" y="1692">0.000m</text>
        <text class="lbl mid" x="761" y="1692">60.000m</text>
        <text class="lbl mid" x="1417" y="1692">120.000m</text>
        <text class="lbl mid" x="2073" y="1692">180.000m</text>
        <text class="lbl mid" x="2729" y="1692">240.000m</text>
        <text class="lbl mid" x="3385" y="1692">300.000m</text>
        <text class="lbl wide under" x="104" y="1719">v(in) (V)</text>
        <text class="lbl wide red" x="414" y="1719">v(out) (V)</text>
        <text class="lbl wide green" x="738" y="1719">v(base) (V)</text>
        <text class="lbl mid" x="1640" y="1746">T (Secs)</text>
        <text class="lbl mid" x="1743" y="252">MonoPolis.cir</text>

        <rect class="marquee" x="1261" y="373" width="34" height="32"/>
        <path class="pointer" d="M1239 355V388L1248 380L1254 393L1260 390L1254 377H1265Z"/>
      </svg>

      <div class="sheetbar">
        <div class="sheet-nav">
          <button class="nav"><svg viewBox="0 0 27 27"><path d="M9 14h9l-4.500 6z" fill="#111"/></svg></button>
          <button class="nav"><svg viewBox="0 0 27 27"><path d="M6 3h2v21H6zM20 3v21L9 13.500z" fill="#111"/></svg></button>
          <button class="nav"><svg viewBox="0 0 27 27"><path d="M19 3v21L8 13.500z" fill="#111"/></svg></button>
          <button class="nav"><svg viewBox="0 0 27 27"><path d="M8 3v21l11-10.500z" fill="#111"/></svg></button>
          <button class="nav"><svg viewBox="0 0 27 27"><path d="M7 3v21l11-10.500zM19 3h2v21h-2z" fill="#111"/></svg></button>
        </div>
        <div class="sheet-tab">
          <svg class="tab-shape" viewBox="0 0 96 32"><path d="M1 0L11 30H79L94 1H96" fill="#f0f0f0" stroke="#111" stroke-width="2"/></svg>
          <span>MAIN</span>
        </div>
        <div class="sheet-rest"></div>
        <div class="sheet-grip"></div>
      </div>
      <div class="client-foot"></div>
    </div>
  </section>

  <div class="doc-tabs">
    <div class="doc-tab">MonoPolis.cir</div>
    <div class="doc-tab active">Transient Analysis</div>
    <div class="doc-fill"></div>
  </div>

  <div class="output">
    <div class="out-side">
      <span class="out-x">x</span>
      <i class="out-grip"></i>
    </div>
    <div class="out-box"></div>
  </div>

  <footer class="status">
    <div class="panel p1">Scale Mode</div>
    <div class="panel p2">Double-click in the window for more options.</div>
    <div class="panel p3">103.720m , 19.947</div>
    <div class="panel p4"></div>
  </footer>

  <div class="taskbar">
    <svg class="widget" viewBox="0 0 46 46"><circle cx="23" cy="23" r="22" fill="url(#gOrb)"/><circle cx="31" cy="30" r="12" fill="#eceff3"/></svg>
    <div class="apps">
      <span class="app-slot"><svg viewBox="0 0 46 46"><path d="M0 0h22v22H0zM24 0h22v22H24zM0 24h22v22H0zM24 24h22v22H24z" fill="url(#gWin)"/></svg></span>
      <span class="app-slot"><svg viewBox="0 0 46 46"><circle cx="20" cy="19" r="16" fill="none" stroke="#222" stroke-width="4.500"/><path d="M30 32l12 13" stroke="#222" stroke-width="5"/></svg></span>
      <span class="app-slot"><svg viewBox="0 0 46 46"><rect x="1" y="12" width="35" height="32" fill="#222"/><rect x="12" y="1" width="34" height="32" fill="#f4f4f4" opacity=".8"/><rect x="12" y="12" width="24" height="21" fill="#c4c4c4"/></svg></span>
      <span class="app-slot"><svg viewBox="0 0 46 46"><path d="M23 1c13 0 22 9 22 21s-9 22-22 22H1c4-3 2-10 1-22C1 10 10 1 23 1z" fill="url(#gChat)"/><rect x="11" y="14" width="18" height="18" fill="#fff"/><path d="M31 19l6-4v16l-6-4z" fill="#fff"/></svg></span>
      <span class="app-slot"><svg viewBox="0 0 46 46"><path d="M0 2h17l4 5h25v38H0z" fill="#f8d265"/><path d="M0 2h17l4 5H0z" fill="#d9a63a"/><path d="M0 7h46v3H0z" fill="#ecdca4"/><rect x="8" y="26" width="30" height="17" rx="3" fill="#2f7fd0"/><rect x="14" y="33" width="18" height="2" fill="#1f5fa8"/></svg></span>
      <span class="app-slot"><svg viewBox="0 0 46 46"><circle cx="23" cy="23" r="23" fill="url(#gEdge)"/><path d="M2 27C3 10 26 6 29 20c-9-3-15 3-12 12 3 7 14 9 26 3-8 12-24 13-32 6C6 37 2 33 2 27z" fill="#2a6fc4"/><path d="M30 30c5 2 11 0 15-4l-3 11c-5 2-11 0-12-7z" fill="#eceeee"/></svg></span>
      <span class="app-slot"><svg viewBox="0 0 46 46"><circle cx="23" cy="23" r="23" fill="url(#gSteam)"/><circle cx="30" cy="17" r="8" fill="none" stroke="#e8edf2" stroke-width="3"/><circle cx="30" cy="17" r="4" fill="#e8edf2"/><circle cx="15" cy="30" r="5.500" fill="#e8edf2"/><path d="M0 26l14 6 10-8-3-5-9 7z" fill="#e8edf2"/></svg></span>
      <span class="app-slot current"><svg viewBox="0 0 32 32"><use href="#i-mc"/></svg><i class="run-bar"></i></span>
    </div>
    <div class="tray">
      <svg class="chev" viewBox="0 0 22 12"><path d="M2 11l9-9 9 9" fill="none" stroke="#333" stroke-width="2.500"/></svg>
      <svg class="net" viewBox="0 0 34 34"><path d="M20 3H1v23h20M4 32h15M8 26l-1 6M15 26l1 6" fill="none" stroke="#222" stroke-width="2"/><rect x="23" y="2" width="9" height="12" rx="2" fill="none" stroke="#222" stroke-width="2"/><path d="M27.500 14v19" stroke="#222" stroke-width="2"/><path d="M23 7h9" stroke="#222" stroke-width="1.500"/></svg>
      <svg class="vol" viewBox="0 0 32 30"><path d="M1 10h6l8-7v24l-8-7H1z" fill="none" stroke="#222" stroke-width="2"/><path d="M19 11a6 6 0 0 1 0 8M23 7a11 11 0 0 1 0 16M27 3a16 16 0 0 1 0 24" fill="none" stroke="#222" stroke-width="2"/></svg>
      <div class="clock"><span>11:38 PM</span><span>11/2/2022</span></div>
    </div>
  </div>

  <div class="tooltip">103.720m,19.947</div>
</div>
<script src="chart.js"></script>
</body>
</html>
```

FILE: styles.css
```css
* { box-sizing: border-box; }
html, body { margin: 0; padding: 0; background: #f0f0f0; }
body { font-family: "Liberation Sans", Arial, sans-serif; color: #000; overflow: hidden; }
.defs { position: absolute; }
.app { position: relative; width: 3456px; height: 2162px; display: flex; flex-direction: column; overflow: hidden; }

/* title bar */
.titlebar { height: 48px; flex: none; background: #f2f2f2; border-top: 2px solid #000; display: flex; align-items: center; padding-left: 5px; }
.title-ic { width: 32px; height: 32px; flex: none; }
.title-text { margin-left: 10px; font-size: 23.4px; color: #111; white-space: nowrap; }
.winctl { margin-left: auto; display: flex; gap: 71px; padding-right: 40px; }
.wc { width: 20px; height: 20px; display: block; }

/* menu */
.menubar { height: 40px; flex: none; background: #fff; border-bottom: 4px solid #f0f0f0; display: flex; align-items: center; padding-left: 14px; }
.doc-ic { width: 32px; height: 32px; flex: none; }
.menu-items { display: flex; gap: 27.5px; margin-left: 14px; padding-top: 3px; font-size: 24px; color: #111; }
.mdictl { margin-left: auto; display: flex; gap: 3px; padding-right: 2px; align-self: stretch; }
.mc-btn { width: 35px; background: #f7f7f7; border: 1px solid #ececec; border-radius: 3px; display: block; }
.mc-btn svg { display: block; width: 33px; height: 34px; }

/* toolbars */
.toolbar-main { height: 64px; flex: none; display: flex; background: #fff; border-top: 2px solid #a0a0a0; border-bottom: 2px solid #a0a0a0; }
.tb-group { display: flex; align-items: center; height: 60px; background: #f0f0f0; border-right: 2px solid #a8a8a8; flex: none; }
.g1 { padding-right: 7px; width: 305px; }
.g2 { padding-right: 8px; width: 352px; }
.g3 { width: 942px; }
.g3 .grip { width: 22px; }
.g4 { width: 316px; }
.g5 { width: 168px; }
.g5 .grip { width: 19px; }
.g6 { width: 370px; }
.g6 .grip { width: 21px; }
.grip { width: 20px; height: 42px; flex: none; position: relative; display: block; background: repeating-linear-gradient(#b4b4b4 0 4px, transparent 4px 13px) 8px 0 / 3px 100% no-repeat; }
.ic { width: 46px; height: 40px; display: block; flex: none; overflow: visible; }
.on { display: block; flex: none; width: 46px; height: 46px; padding-top: 1px; background: #f7f7f7; border: 2px solid; border-color: #a8a8a8 #ffffff #ffffff #a8a8a8; }
.on .ic { margin: 1px -2px 0; }
.drop { display: block; flex: none; width: 30px; height: 40px; background: linear-gradient(#111, #111) no-repeat; clip-path: polygon(8px 17px, 22px 17px, 15px 27px); }
.drop.gray { background: linear-gradient(#9a9a9a, #9a9a9a) no-repeat; }
.drop.wide { width: 32px; }
.drop.wider { width: 33px; }
.sep { display: block; flex: none; height: 38px; background: linear-gradient(#b0b0b0, #b0b0b0) center / 2px 100% no-repeat; }
.s5 { width: 5px; } .s6 { width: 6px; } .s7 { width: 7px; } .s8 { width: 8px; } .s9 { width: 9px; }
.s10 { width: 10px; } .s11 { width: 11px; } .s12 { width: 12px; } .s13 { width: 13px; } .s14 { width: 14px; } .s16 { width: 16px; }
.toolbar-plot { height: 64px; display: flex; align-items: center; margin-left: -8px; padding-left: 12px; background: #f0f0f0; border-top: 2px solid #f7f7f7; flex: none; }

/* icon text */
.ic-fx { font: italic bold 20px "Liberation Serif", serif; fill: #111; }
.ic-T { font: bold 42px "Liberation Serif", serif; fill: #000; }
.ic-m { font: bold 24px "Liberation Serif", serif; fill: #1d2b4a; }
.ic-123 { font: bold 12px "Liberation Sans", sans-serif; fill: #111; }
.ic-A { font: bold 42px "Liberation Serif", serif; fill: #31508f; }
.ic-mc { font: bold 19px "Liberation Sans", sans-serif; fill: #b01818; }

/* child window */
.child { height: 1669px; flex: none; display: flex; flex-direction: column; background: #f0f0f0; border-left: 2px solid #a8a8a8; border-right: 3px solid #8a8a8a; border-bottom: 3px solid #8a8a8a; padding-left: 8px; padding-right: 11px; }
.client { flex: none; width: 3432px; border-left: 2px solid #808080; border-top: 4px solid #6a6a6a; }
.chart { display: block; background: #fff; }
.grid-h path { fill: none; stroke: #808080; stroke-width: 2; stroke-dasharray: 6 6; shape-rendering: crispEdges; }
.grid-v path { fill: none; stroke: #808080; stroke-width: 2; stroke-dasharray: 7 5; shape-rendering: crispEdges; }
.frame { fill: none; stroke: #808080; stroke-width: 2; shape-rendering: crispEdges; }
.trace { fill: none; stroke-width: 2; shape-rendering: crispEdges; }
.t-in { stroke: #0000ff; }
.t-out { stroke: #ee3224; }
.t-base { stroke: #4c9a2a; }
.lbl { font-family: "Liberation Sans", Arial, sans-serif; font-size: 21.5px; fill: #0000ff; }
.lbl.wide { font-size: 22.4px; }
.lbl.end { text-anchor: end; }
.lbl.mid { text-anchor: middle; }
.lbl.under { text-decoration: underline; }
.lbl.red { fill: #ee3224; }
.lbl.green { fill: #4c9a2a; }
.marquee { fill: none; stroke: #000; stroke-width: 2; stroke-dasharray: 2 2; shape-rendering: crispEdges; }
.pointer { fill: #fff; stroke: #000; stroke-width: 2; }

/* sheet tabs */
.sheetbar { height: 35px; display: flex; background: #f0f0f0; }
.sheet-nav { display: flex; height: 32px; border-left: 2px solid #a8a8a8; padding-left: 11px; border-bottom: 4px solid #6e6e6e; background: #e8e8e8; flex: none; }
.nav { width: 32px; height: 28px; padding: 0; display: block; background: #f0f0f0; border: 2px solid; border-color: #fff #6e6e6e #6e6e6e #fff; }
.nav svg { display: block; width: 27px; height: 24px; }
.sheet-tab { position: relative; width: 96px; height: 32px; margin-left: 3px; flex: none; font-weight: bold; font-size: 23.5px; }
.tab-shape { position: absolute; left: 0; top: 0; width: 96px; height: 32px; }
.sheet-tab span { position: relative; display: block; padding: 2px 0 0 15px; color: #000; }
.sheet-rest { flex: 1; border-top: 2px solid #000; }
.sheet-grip { width: 34px; height: 14px; background: #f0f0f0; border: 2px solid; border-color: #fff #6e6e6e #6e6e6e #fff; }
.client-foot { height: 6px; background: #f0f0f0; border-top: 2px solid #fff; margin-right: -2px; }

/* document tabs */
.doc-tabs { height: 55px; flex: none; display: flex; align-items: flex-start; padding-left: 8px; background: #efefef; border-bottom: 6px solid #efefef; box-shadow: inset 0 -2px 0 #fff; font-size: 21.3px; color: #111; }
.doc-tab { height: 39px; width: 146px; padding: 8px 0 0 10px; border-bottom: 3px solid #808080; white-space: nowrap; }
.doc-tab.active { width: 198px; height: 45px; margin: -3px 0 0 2px; padding: 14px 0 0 12px; background: #efefef; border-right: 3px solid #808080; position: relative; }
.doc-fill { flex: 1; }

/* output */
.output { height: 144px; flex: none; display: flex; background: #f0f0f0; border-top: 2px solid #a0a0a0; border-bottom: 2px solid #a0a0a0; padding: 8px 6px 6px 0; }
.out-side { width: 30px; flex: none; display: flex; flex-direction: column; align-items: center; }
.out-x { font-size: 20px; font-weight: bold; line-height: 20px; margin-left: -1px; }
.out-grip { width: 10px; flex: 1; margin: 8px 0 1px -2px; display: block; background: #ececec; border: 2px solid #b4b4b4; border-bottom-width: 3px; }
.out-box { flex: 1; background: #fff; }

/* status */
.status { height: 47px; flex: none; display: flex; gap: 6px; padding-top: 6px; background: #f0f0f0; border-bottom: 3px solid #c0c0c0; font-size: 28.6px; color: #111; }
.panel { height: 38px; background: #f0f0f0; border: 2px solid; border-color: #a4a4a4 #fff #fff #a4a4a4; padding-left: 2px; line-height: 34px; white-space: nowrap; overflow: hidden; }
.p1 { width: 316px; padding-left: 3px; border-left-color: #f0f0f0; }
.p2 { width: 2660px; font-size: 29.1px; }
.p3 { width: 260px; padding-left: 3px; }
.p4 { flex: 1; margin-right: 2px; }

/* taskbar */
.taskbar { flex: 1; display: flex; align-items: center; background: #eeeeee; padding-left: 34px; }
.widget { width: 46px; height: 46px; flex: none; }
.apps { display: flex; margin-left: 1297px; flex: none; }
.app-slot { width: 88px; height: 77px; display: flex; align-items: center; justify-content: center; position: relative; }
.app-slot svg { width: 46px; height: 46px; display: block; }
.app-slot.current { background: #f6f6f6; border: 2px solid #ececec; border-radius: 6px; width: 76px; margin-left: 6px; }
.run-bar { position: absolute; left: 21px; right: 21px; bottom: 0; height: 6px; background: #2f78d4; border-radius: 3px; }
.app-slot:nth-child(5)::after, .app-slot:nth-child(7)::after { content: ""; position: absolute; left: 41px; bottom: 0; width: 7px; height: 7px; border-radius: 50%; background: #858585; }
.tray { margin-left: auto; display: flex; align-items: center; padding-right: 38px; color: #333; }
.chev { width: 22px; height: 12px; display: block; }
.net { width: 34px; height: 34px; margin-left: 37px; display: block; }
.vol { width: 32px; height: 30px; margin-left: 15px; display: block; }
.clock { width: 136px; display: flex; flex-direction: column; align-items: flex-end; font-size: 22.2px; line-height: 32px; }

/* tooltip over the plot */
.tooltip { position: absolute; left: 1238px; top: 391px; width: 184px; height: 36px; background: #ffffe1; border: 2px solid #696969; font-size: 21.5px; line-height: 32px; padding-left: 5px; color: #1a1a2a; white-space: nowrap; }
```

FILE: chart.js
```js
(function () {
  var X0 = 105, PX_MS = 3280 / 300, Y0 = 1105, PX_V = 37.6;
  var HIGH = 619, LOW = 1590;
  function x(t) { return X0 + t * PX_MS; }
  function y(v) { return Y0 - v * PX_V; }
  function tri(t) {
    var m = t % 180;
    return m < 90 ? m / 9 : 20 - m / 9;
  }
  function vin(t) { return tri(t) + Math.cos(2 * Math.PI * (t - 0.15)); }
  function even(v) { return 2 * Math.round(v / 2); }

  // v(in): stepped samples every 2 px
  var d = ["M106 " + Math.round(y(vin(0)))];
  for (var px = 106; px <= 3384; px += 2) {
    var s = (px - X0) / PX_MS;
    d.push("V" + 2 * Math.round(y(vin(s)) / 2) + "H" + Math.min(px + 2, 3384));
  }
  document.getElementById("w-in").setAttribute("d", d.join(""));

  // v(out): inverting comparator on v(in) around 5 V
  var edges = [], state = vin(0) > 5, t;
  for (t = 0; t <= 300; t += 0.005) {
    var now = vin(t) > 5;
    if (now !== state) { edges.push(t); state = now; }
  }
  var r = ["M106 " + HIGH], level = HIGH;
  edges.forEach(function (e, k) {
    var ex = even(x(e)), next = level === HIGH ? LOW : HIGH;
    r.push("H" + ex);
    if ((k * 7 + 3) % 11 === 0) {
      var mid = level === HIGH ? HIGH + 60 + (k * 37) % 700 : LOW - 60 - (k * 37) % 700;
      r.push("V" + mid + "H" + (ex + 2));
    }
    r.push("V" + next);
    level = next;
  });
  r.push("H3384");
  // first partial switching at the burst starts, last partial swing at their ends
  r.push("M501 619V1446M2471 619V1430M693 1590V1254M2660 1590V1254");
  document.getElementById("w-out").setAttribute("d", r.join(""));
})();
```
